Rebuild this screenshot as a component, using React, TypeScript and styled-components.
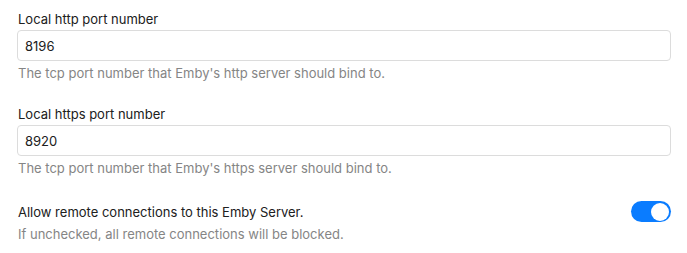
import styled, { createGlobalStyle } from 'styled-components';

const GlobalStyle = createGlobalStyle`
  * {
    box-sizing: border-box;
  }

  body {
    margin: 0;
    background: #fff;
    font-family: Inter, "Noto Sans", sans-serif;
    font-size: 13px;
    color: #202020;
  }
`;

const Page = styled.div`
  display: flex;
  flex-direction: column;
  gap: 23px;
  padding: 10px 16px 0 17px;
`;

const Field = styled.div`
  display: flex;
  flex-direction: column;
`;

const Label = styled.label`
  line-height: 18px;
  margin-bottom: 2px;
  padding-left: 1px;
`;

const Input = styled.input`
  height: 31px;
  width: 100%;
  padding: 0 7px;
  border: 1px solid #dcdcdc;
  border-radius: 4px;
  font-family: inherit;
  font-size: 13px;
  color: #202020;
  outline: none;
`;

const Description = styled.div`
  margin-top: 3px;
  padding-left: 1px;
  line-height: 18px;
  color: #858585;
`;

const ToggleRow = styled.div`
  display: flex;
  align-items: center;
  justify-content: space-between;
  height: 21px;
  margin-top: 1px;
  padding-left: 1px;
`;

const Toggle = styled.button<{ $on: boolean }>`
  position: relative;
  width: 40px;
  height: 21px;
  padding: 0;
  border: none;
  border-radius: 11px;
  background: ${({ $on }) => ($on ? '#0a7cff' : '#c8c8c8')};
  cursor: pointer;

  &::after {
    content: '';
    position: absolute;
    top: 1.5px;
    left: ${({ $on }) => ($on ? '20px' : '2px')};
    width: 18px;
    height: 18px;
    border-radius: 50%;
    background: #fff;
  }
`;

const settings = [
  { label: 'Local http port number', value: '8196', help: "The tcp port number that Emby's http server should bind to." },
  { label: 'Local https port number', value: '8920', help: "The tcp port number that Emby's https server should bind to." },
];

const App = () => {
  return (
    <>
      <GlobalStyle />
      <Page>
        {settings.map((s) => (
          <Field key={s.label}>
            <Label>{s.label}</Label>
            <Input defaultValue={s.value} />
            <Description>{s.help}</Description>
          </Field>
        ))}
        <Field>
          <ToggleRow>
            <span>Allow remote connections to this Emby Server.</span>
            <Toggle $on aria-label="Allow remote connections" />
          </ToggleRow>
          <Description>If unchecked, all remote connections will be blocked.</Description>
        </Field>
      </Page>
    </>
  );
};

export default App;
